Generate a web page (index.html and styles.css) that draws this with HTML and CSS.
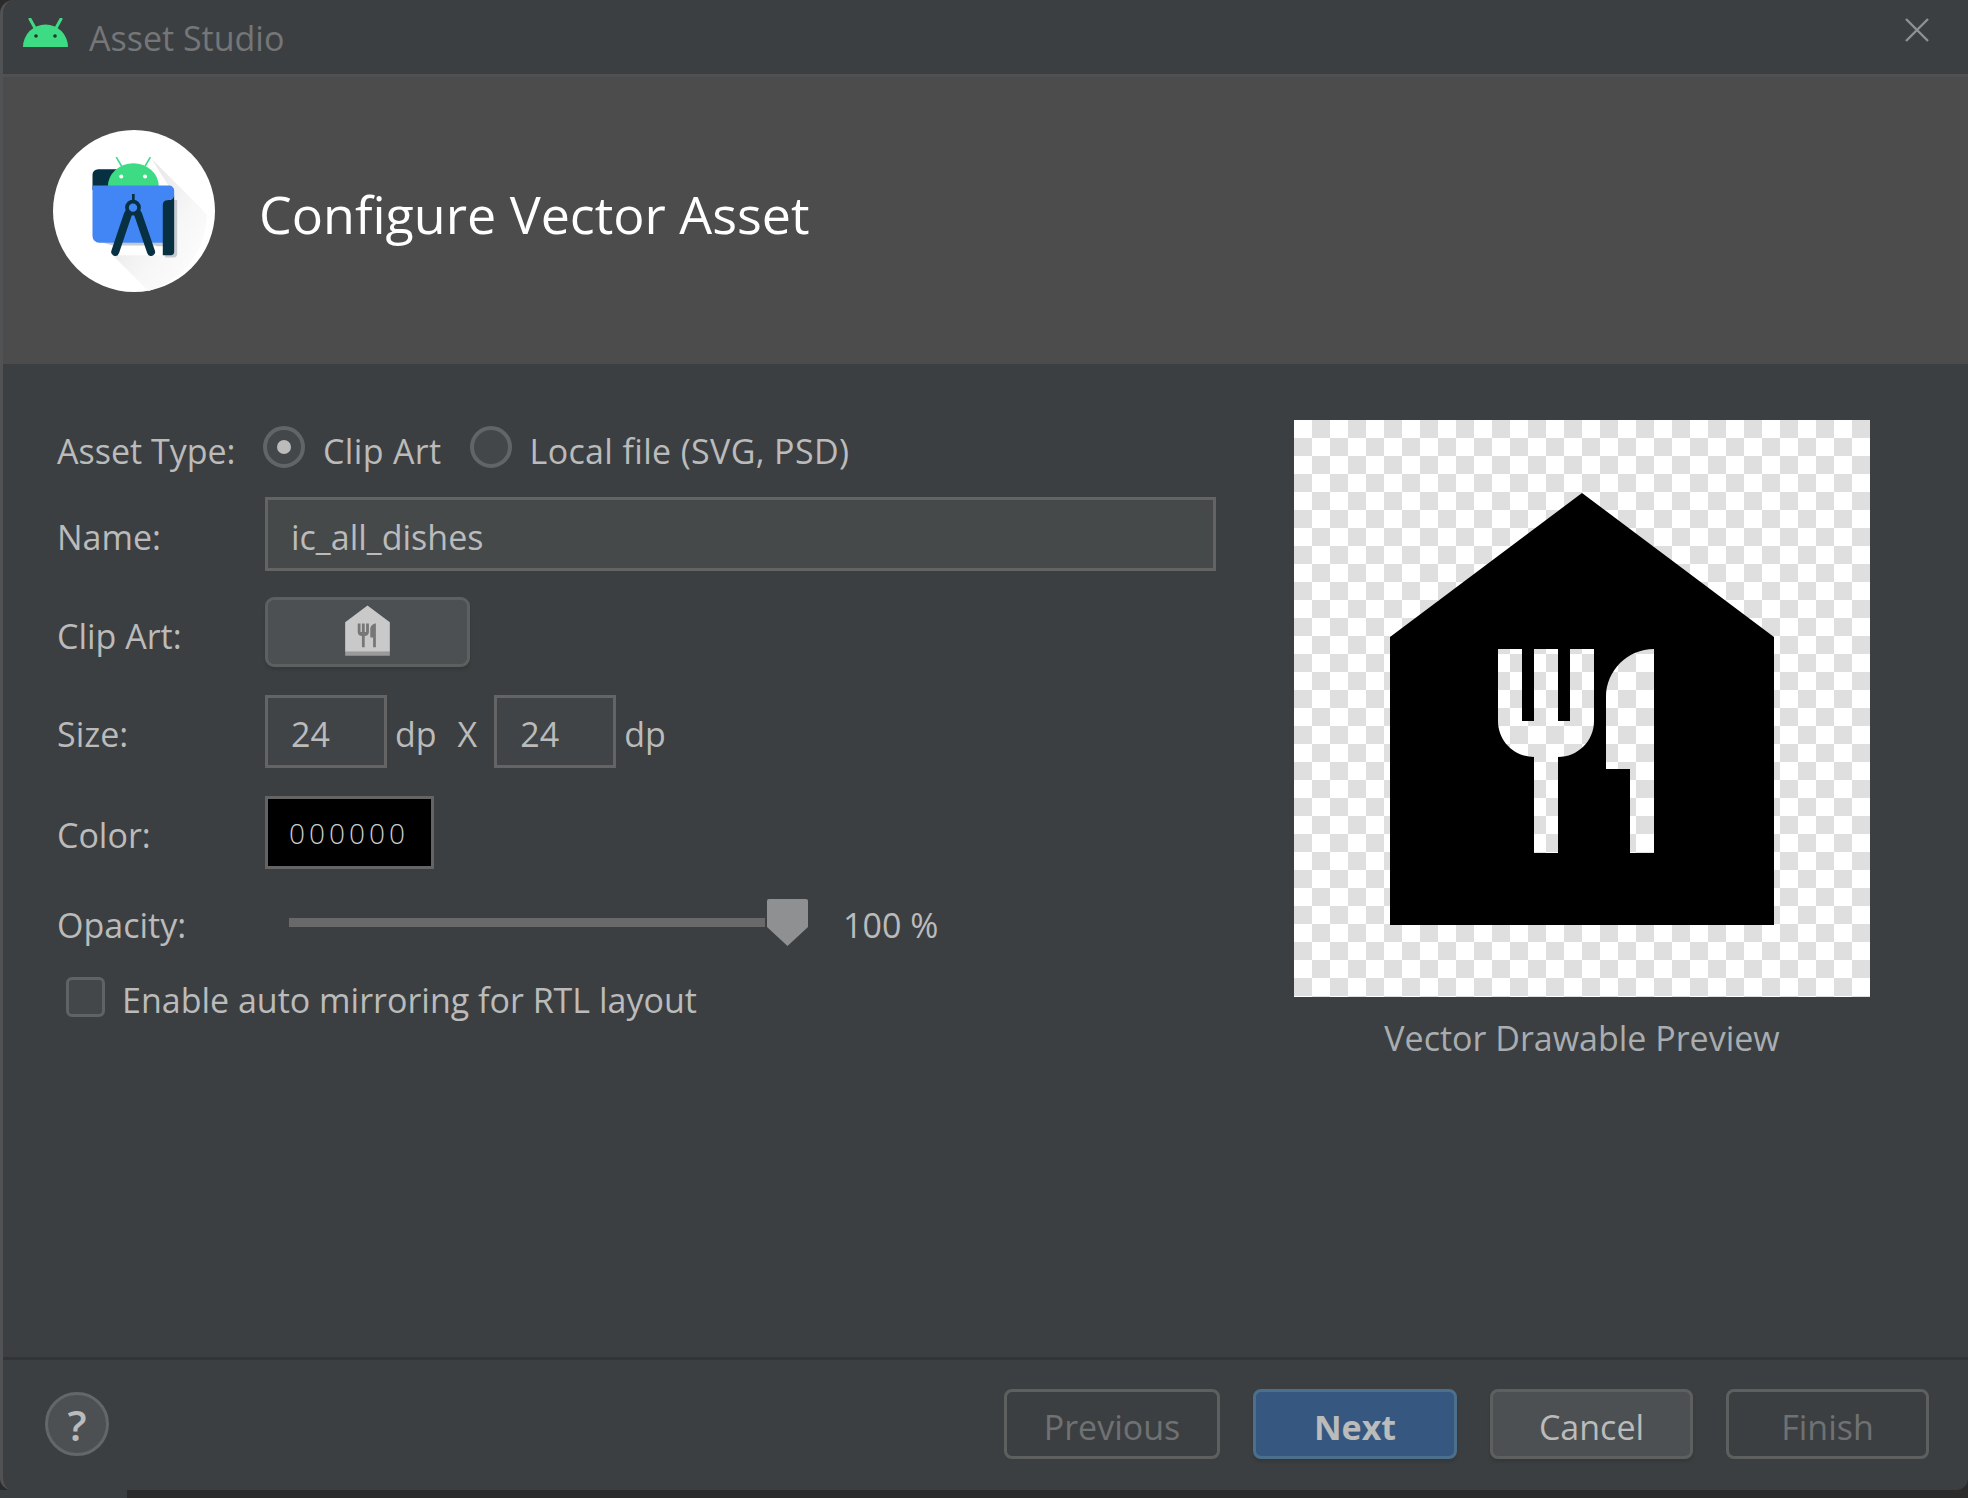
FILE: index.html
```html
<!DOCTYPE html>
<html lang="en">
<head>
  <meta charset="UTF-8" />
  <title>Asset Studio</title>
  <link rel="stylesheet" href="styles.css">
</head>
<body>
  <div class="dialog">
    <div class="titlebar">
      <svg class="android" viewBox="0 0 46 29">
        <path d="M0 29a22.5 22.5 0 0 1 45 0z" fill="#3ddc84"/>
        <path d="M7 1l5 9M38 1l-5 9" stroke="#3ddc84" stroke-width="3" stroke-linecap="round"/>
        <circle cx="13" cy="18" r="1.8" fill="#21352c"/>
        <circle cx="32" cy="18" r="1.8" fill="#21352c"/>
      </svg>
      <span class="title-text">Asset Studio</span>
      <svg class="close" viewBox="0 0 24 24">
        <path d="M1 1l22 22M23 1L1 23" stroke="#8f9193" stroke-width="2.4" fill="none"/>
      </svg>
    </div>

    <div class="banner">
      <svg class="logo" viewBox="40 31 484 484">
        <defs>
          <linearGradient id="longShadow" x1="0" y1="0" x2="1" y2="1">
            <stop offset="0" stop-color="#dcdcdc"/>
            <stop offset="0.6" stop-color="#f7f7f7"/>
            <stop offset="1" stop-color="#ffffff"/>
          </linearGradient>
        </defs>
        <circle cx="282" cy="273" r="242" fill="#fff"/>
        <path d="M335 118L500 283A242 242 0 0 1 325 512L218 405L402 405V225z" fill="url(#longShadow)"/>
        <path d="M185 366H370V378H350L345 376H240L232 380z M396 240H411V404a10 10 0 0 1-10 8H375V400H396z" fill="#c6cbd2"/>
        <path d="M158 210V165a17 17 0 0 1 17-17H250V210z" fill="#073042"/>
        <path d="M204 200a76 70 0 0 1 152 0z" fill="#3ddc84"/>
        <path d="M229 112l16 27M331 112l-16 27" stroke="#3ddc84" stroke-width="5"/>
        <circle cx="244" cy="170" r="6" fill="#fff"/>
        <circle cx="315" cy="170" r="6" fill="#fff"/>
        <path d="M158 197H387a15 15 0 0 1 15 15V225a15 15 0 0 1-15 15q-17 0-17 15V368H178a20 20 0 0 1-20-20z" fill="#4285f4"/>
        <path d="M402 225V395a10 10 0 0 1-10 10H368V255q0-15 17-15a17 17 0 0 0 17-15z" fill="#073042"/>
        <path d="M264 282L226 395M294 282L333 395" stroke="#073042" stroke-width="24" stroke-linecap="round" fill="none"/>
        <path d="M280 222V245" stroke="#073042" stroke-width="8"/>
        <circle cx="279" cy="263" r="18" fill="#4285f4" stroke="#073042" stroke-width="11"/>
      </svg>
      <h1 class="banner-title">Configure Vector Asset</h1>
    </div>

    <div class="content">
      <div class="form">
        <div class="row row-type">
          <label class="label">Asset Type:</label>
          <span class="radio radio-on"></span>
          <span class="radio-text">Clip Art</span>
          <span class="radio radio-second"></span>
          <span class="radio-text">Local file (SVG, PSD)</span>
        </div>
        <div class="row row-name">
          <label class="label">Name:</label>
          <div class="field field-name">ic_all_dishes</div>
        </div>
        <div class="row row-clip">
          <label class="label">Clip Art:</label>
          <div class="clip-button">
            <svg class="clip-icon" viewBox="0 0 24 24">
              <rect x="8" y="9" width="8" height="9.5" fill="#777"/>
              <path d="M4 19.6h16V21H4z" fill="#9a9a9a"/>
              <path fill-rule="evenodd" fill="#c9c9c9" d="M12 3L4 9v10.6h16V9L12 3z M12.5 12.5c0 .83-.67 1.5-1.5 1.5v4h-1v-4c-.83 0-1.5-.67-1.5-1.5v-3h1v3H10v-3h1v3h.5v-3h1V12.5z M15 18h-1v-3.5h-1v-3c0-1.1.9-2 2-2V18z"/>
            </svg>
          </div>
        </div>
        <div class="row row-size">
          <label class="label">Size:</label>
          <div class="field field-size">24</div>
          <span class="unit">dp</span>
          <span class="times">X</span>
          <div class="field field-size">24</div>
          <span class="unit">dp</span>
        </div>
        <div class="row row-color">
          <label class="label">Color:</label>
          <div class="swatch">000000</div>
        </div>
        <div class="row row-opacity">
          <label class="label">Opacity:</label>
          <div class="slider">
            <div class="track"></div>
            <svg class="thumb" viewBox="0 0 41 47">
              <path d="M2 0H39a2 2 0 0 1 2 2V28L20.5 47 0 28V2a2 2 0 0 1 2-2z" fill="#8f9091"/>
            </svg>
          </div>
          <span class="percent">100 %</span>
        </div>
        <div class="row row-check">
          <span class="checkbox"></span>
          <span class="check-text">Enable auto mirroring for RTL layout</span>
        </div>
      </div>

      <div class="preview">
        <div class="checker">
          <svg class="preview-icon" viewBox="0 0 24 24">
            <path fill-rule="evenodd" d="M12 3L4 9v12h16V9L12 3z M12.5 12.5c0 .83-.67 1.5-1.5 1.5v4h-1v-4c-.83 0-1.5-.67-1.5-1.5v-3h1v3H10v-3h1v3h.5v-3h1V12.5z M15 18h-1v-3.5h-1v-3c0-1.1.9-2 2-2V18z"/>
          </svg>
        </div>
        <div class="preview-label">Vector Drawable Preview</div>
      </div>
    </div>

    <div class="footer">
      <div class="help">?</div>
      <div class="buttons">
        <button class="btn btn-prev" disabled>Previous</button>
        <button class="btn btn-next">Next</button>
        <button class="btn btn-cancel">Cancel</button>
        <button class="btn btn-finish" disabled>Finish</button>
      </div>
    </div>
  </div>
  <div class="behind"><div class="behind-left"></div></div>
</body>
</html>
```

FILE: styles.css
```css
html, body { margin: 0; height: 100%; }
body { background: #2b2b2b; font-family: "Open Sans", sans-serif; color: #bbb; font-size: 34px; overflow: hidden; }

.dialog {
  height: 1490px; box-sizing: border-box; display: flex; flex-direction: column;
  background: #3c3f41; border-left: 3px solid #505254; border-radius: 14px 0 12px 12px; overflow: hidden;
}

.titlebar { height: 74px; flex: none; display: flex; align-items: center; border-bottom: 3px solid #505152; box-sizing: content-box; }
.android { width: 46px; height: 29px; margin: -10px 0 0 20px; }
.title-text { margin: 2px 0 0 20px; font-size: 34px; color: #747678; }
.close { width: 24px; height: 24px; margin: -14px 39px 0 auto; }

.banner { height: 287px; flex: none; display: flex; align-items: center; background: #4c4c4c; }
.logo { width: 162px; height: 162px; margin: -20px 0 0 50px; }
.banner-title { margin: -14px 0 0 44px; font-size: 52px; font-weight: 400; color: #fff; }

.content { flex: 1; display: flex; justify-content: space-between; padding: 56px 98px 0 54px; }

.form { width: 1160px; }
.row { display: flex; align-items: center; }
.label { width: 208px; flex: none; padding-top: 5px; }

.row-type { height: 44px; margin-top: 7px; }
.row-name { height: 74px; margin-top: 26px; }
.row-clip { height: 70px; margin-top: 26px; }
.row-size { height: 73px; margin-top: 28px; }
.row-color { height: 73px; margin-top: 28px; }
.row-opacity { height: 47px; margin-top: 30px; }
.row-check { height: 40px; margin-top: 31px; }

.row-clip .label { padding-top: 7px; }
.row-type .label { padding-top: 4px; }

.radio { width: 42px; height: 42px; box-sizing: border-box; border: 4px solid #626567; border-radius: 50%; background: #43474a; flex: none; }
.radio-on { position: relative; margin: -4px 0 0 -2px; }
.radio-on::after { content: ""; position: absolute; left: 10px; top: 10px; width: 14px; height: 14px; border-radius: 50%; background: #bbb; }
.radio-second { margin: -4px 0 0 28px; }
.radio-text { margin-left: 18px; padding-top: 4px; letter-spacing: 0.35px; }

.field { box-sizing: border-box; height: 100%; border: 3px solid #646464; background: #45494a; padding: 5px 0 0 23px; display: flex; align-items: center; }
.field-name { width: 951px; }
.field-size { width: 122px; background: #414446; }
.unit { margin-left: 8px; padding-top: 5px; }
.times { margin: 0 17px 0 21px; padding-top: 5px; }

.clip-button { width: 205px; height: 100%; box-sizing: border-box; border: 3px solid #5e6060; border-radius: 9px; background: #4c5052; display: flex; align-items: center; justify-content: center; box-shadow: 0 3px 3px #36393b; }
.clip-icon { width: 67px; height: 67px; margin-top: -4px; }

.swatch { width: 169px; height: 100%; box-sizing: border-box; border: 3px solid #646464; background: #000; color: #ccc; font-size: 28px; letter-spacing: 4px; padding-left: 21px; display: flex; align-items: center; font-weight: 300; }

.slider { width: 519px; margin-left: 24px; height: 100%; display: flex; align-items: center; flex: none; }
.track { width: 476px; height: 9px; background: #696969; }
.thumb { width: 41px; height: 47px; margin-left: 2px; }
.percent { margin-left: 35px; padding-top: 5px; }

.checkbox { width: 39px; height: 40px; box-sizing: border-box; margin-left: 9px; border: 3px solid #5f6365; border-radius: 6px; background: #43474a; flex: none; }
.check-text { margin-left: 17px; padding-top: 5px; }

.preview { width: 576px; }
.checker {
  width: 576px; height: 577px; display: flex;
  background: repeating-conic-gradient(#dfdfdf 0 25%, #fff 0 50%) 0 0 / 36px 36px;
}
.preview-icon { width: 576px; height: 576px; margin-top: 1px; }
.preview-label { text-align: center; margin-top: 18px; color: #a9adb0; font-size: 34px; }

.footer { height: 133px; flex: none; box-sizing: border-box; border-top: 3px solid #323436; display: flex; align-items: center; padding: 0 39px 0 42px; }
.help { width: 64px; height: 64px; border-radius: 50%; box-sizing: border-box; border: 3px solid #646769; background: #4c5052; color: #bbb; font-size: 42px; font-weight: 600; display: flex; align-items: center; justify-content: center; margin-top: -2px; }
.buttons { margin-left: auto; display: flex; gap: 33px; margin-top: -2px; }
.btn { height: 70px; box-sizing: border-box; border: 3px solid #5e6060; border-radius: 8px; background: transparent; font: 34px "Open Sans", sans-serif; color: #bbb; padding: 5px 0 0; }
.btn-prev { width: 216px; color: #6f7173; }
.btn-next { width: 204px; background: #365880; border-color: #4c708c; font-weight: 700; box-shadow: 0 3px 3px #36393b; }
.btn-cancel { width: 203px; background: #4c5052; box-shadow: 0 3px 3px #36393b; }
.btn-finish { width: 203px; color: #6f7173; }

.behind { height: 8px; }
.behind-left { width: 127px; height: 8px; background: #3c3f41; }
```
